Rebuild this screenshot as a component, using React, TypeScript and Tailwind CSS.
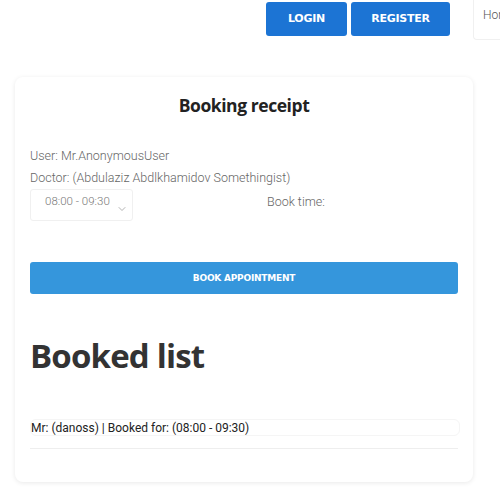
import { ChevronDown } from "lucide-react";

export default function App() {
  return (
    <div className="w-[500px] h-[500px] overflow-hidden bg-white font-['Roboto',sans-serif]">
      {/* Top nav */}
      <div className="flex items-start h-[44px]">
        <div className="flex-1" />
        <div className="flex gap-[4px] pt-[2px]">
          <button className="w-[81px] h-[34px] rounded-[3px] bg-[#1c74d4] text-white text-[11px] font-bold font-['DejaVu_Sans',sans-serif] tracking-tight">
            LOGIN
          </button>
          <button className="w-[99px] h-[34px] rounded-[3px] bg-[#1c74d4] text-white text-[11px] font-bold font-['DejaVu_Sans',sans-serif] tracking-tight">
            REGISTER
          </button>
        </div>
        <div className="ml-[23px] w-[27px] h-[40px] shrink-0 border-l border-b border-[#f0f0f0] rounded-bl-[4px] pl-[9px] pt-[6px] text-[12px] text-[#555] font-light whitespace-nowrap">
          Home
        </div>
      </div>

      {/* Card */}
      <div className="mx-[15px] mt-[33px] w-[458px] h-[405px] rounded-[8px] bg-white shadow-[0_1px_5px_rgba(0,0,0,0.09)] px-[15px] pt-[15px]">
        <h1 className="text-center text-[17.5px] font-bold text-[#222] font-['Open_Sans',sans-serif] tracking-tight">
          Booking receipt
        </h1>

        <div className="mt-[27px] text-[12.5px] text-[#666] font-light leading-[22px]">
          <p>User: Mr.AnonymousUser</p>
          <p>Doctor: (Abdulaziz Abdlkhamidov Somethingist)</p>
        </div>

        <div className="flex items-start">
          <div className="w-[103px] h-[32px] rounded-[3px] border border-[#f0f0f0] flex items-start pl-[14px] pt-[3px] text-[11.5px] text-[#777] font-light whitespace-nowrap">
            <span>08:00 - 09:30</span>
            <ChevronDown className="ml-[6px] mt-[10px] w-[12px] h-[12px] shrink-0 text-[#999]" strokeWidth={1.5} />
          </div>
          <span className="ml-[134px] mt-[4px] text-[12.5px] text-[#666] font-light">Book time:</span>
        </div>

        <button className="mt-[41px] w-[428px] h-[32px] rounded-[3px] bg-[#3596dc] text-white text-[9px] font-bold font-['DejaVu_Sans',sans-serif] tracking-tight">
          BOOK APPOINTMENT
        </button>

        <h2 className="mt-[42px] text-[33px] leading-[40px] font-bold text-[#333] font-['Open_Sans',sans-serif] tracking-tight">
          Booked list
        </h2>

        <div className="mt-[43px] w-[430px] h-[17px] rounded-[6px] border border-[#f5f5f5] flex items-center text-[12px] text-[#222]">
          Mr: (danoss) | Booked for: (08:00 - 09:30)
        </div>
        <div className="mt-[12px] w-[428px] border-t border-[#eee]" />
      </div>
    </div>
  );
}
